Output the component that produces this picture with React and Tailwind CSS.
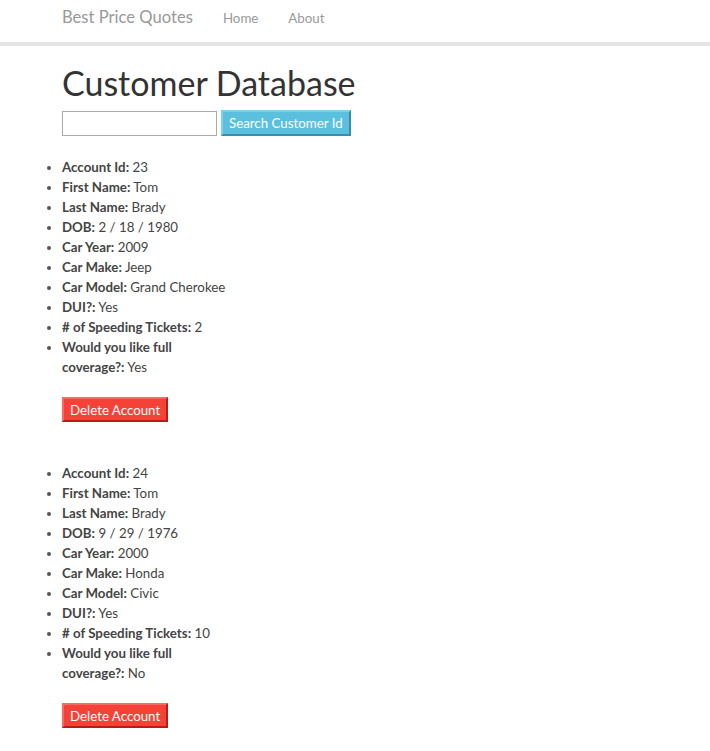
import React from 'react';

const customers = [
  { id: 23, first: 'Tom', last: 'Brady', dob: '2 / 18 / 1980', year: 2009, make: 'Jeep', model: 'Grand Cherokee', dui: 'Yes', tickets: 2, coverage: 'Yes' },
  { id: 24, first: 'Tom', last: 'Brady', dob: '9 / 29 / 1976', year: 2000, make: 'Honda', model: 'Civic', dui: 'Yes', tickets: 10, coverage: 'No' },
];

const CustomerCard = ({ c }) => {
  const rows = [
    ['Account Id:', c.id],
    ['First Name:', c.first],
    ['Last Name:', c.last],
    ['DOB:', c.dob],
    ['Car Year:', c.year],
    ['Car Make:', c.make],
    ['Car Model:', c.model],
    ['DUI?:', c.dui],
    ['# of Speeding Tickets:', c.tickets],
    ['Would you like full coverage?:', c.coverage],
  ];
  return (
    <div className="mb-[41px]">
      <ul className="list-disc pl-[62px] w-[232px] marker:text-[#555]">
        {rows.map(([label, value]) => (
          <li key={label} className="leading-[20px]">
            <b className="font-bold">{label}</b> {value}
          </li>
        ))}
      </ul>
      <div className="pl-[62px] mt-[20px]">
        <button className="bg-[#f44336] text-white text-[13.3px] leading-[18px] px-[6px] pt-[2px] pb-[1px] border-2 border-t-[#f66] border-l-[#f66] border-r-[#b71c1c] border-b-[#b71c1c]">
          Delete Account
        </button>
      </div>
    </div>
  );
};

export default function App() {
  return (
    <div className="min-h-screen bg-white text-[#444] text-[13.3px]" style={{ fontFamily: 'Lato, "Open Sans", sans-serif' }}>
      <nav className="h-[46px] border-b-4 border-[#e5e5e5] flex items-baseline pl-[62px] pt-[5px]">
        <span className="text-[16.6px] text-[#999] mr-[30px]">Best Price Quotes</span>
        <a className="text-[13.3px] text-[#999] mr-[30px]">Home</a>
        <a className="text-[13.3px] text-[#999]">About</a>
      </nav>
      <div className="pl-[62px]">
        <h1 className="text-[34px] leading-[40px] text-[#333] mt-[17px]">Customer Database</h1>
        <div className="flex items-center gap-[4px] mt-[7px]">
          <input className="w-[155px] h-[25px] border border-[#aaa] outline-none" />
          <button className="bg-[#5bc0de] text-white text-[13.3px] leading-[18px] px-[6px] pt-[2px] pb-[2px] border-2 border-t-[#7dd0ea] border-l-[#7dd0ea] border-r-[#3a8fa8] border-b-[#3a8fa8]">
            Search Customer Id
          </button>
        </div>
      </div>
      <div className="mt-[21px]">
        {customers.map((c) => (
          <CustomerCard key={c.id} c={c} />
        ))}
      </div>
    </div>
  );
}
